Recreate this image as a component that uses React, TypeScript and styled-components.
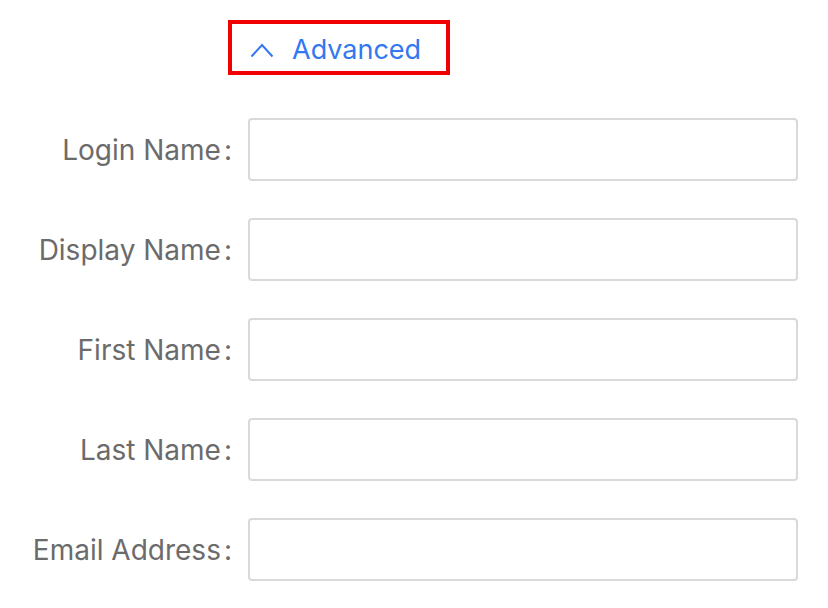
import styled, { createGlobalStyle } from 'styled-components'

const GlobalStyles = createGlobalStyle`
  html, body {
    margin: 0;
    padding: 0;
    background: #ffffff;
  }
  body {
    font-family: Inter, 'Liberation Sans', Arial, sans-serif;
  }
`

const Page = styled.div`
  padding: 20px 30px 0 0;
`

const ToggleRow = styled.div`
  padding-left: 228px;
`

const Toggle = styled.button`
  display: flex;
  align-items: center;
  gap: 18px;
  box-sizing: border-box;
  width: 222px;
  height: 55px;
  padding: 4px 0 0 18px;
  border: 4px solid #f00000;
  background: #fff;
  color: #3278f0;
  font-family: inherit;
  font-size: 27px;
  cursor: pointer;
`

const Form = styled.div`
  display: grid;
  grid-template-columns: 232px 550px;
  column-gap: 16px;
  row-gap: 37px;
  margin-top: 43px;
  align-items: center;
`

const Label = styled.label`
  text-align: right;
  color: #6b6b6b;
  font-size: 28px;
  white-space: nowrap;
`

const Colon = styled.span`
  margin-left: 3px;
`

const Input = styled.input`
  box-sizing: border-box;
  height: 63px;
  width: 100%;
  border: 2px solid #d9d9d9;
  border-radius: 4px;
  background: #fff;
  outline: none;
  padding: 0 16px;
  font-size: 26px;
`

const fields = ['Login Name', 'Display Name', 'First Name', 'Last Name', 'Email Address']

export default function App() {
  return (
    <>
      <GlobalStyles />
      <Page>
        <ToggleRow>
          <Toggle>
            <svg width="24" height="16" viewBox="0 0 24 16" fill="none">
              <path d="M1.5 14.5 L12 3 L22.5 14.5" stroke="#3278f0" strokeWidth="2" />
            </svg>
            Advanced
          </Toggle>
        </ToggleRow>
        <Form>
          {fields.map((f) => (
            <>
              <Label key={f + '-l'}>
                {f}
                <Colon>:</Colon>
              </Label>
              <Input key={f + '-i'} />
            </>
          ))}
        </Form>
      </Page>
    </>
  )
}
